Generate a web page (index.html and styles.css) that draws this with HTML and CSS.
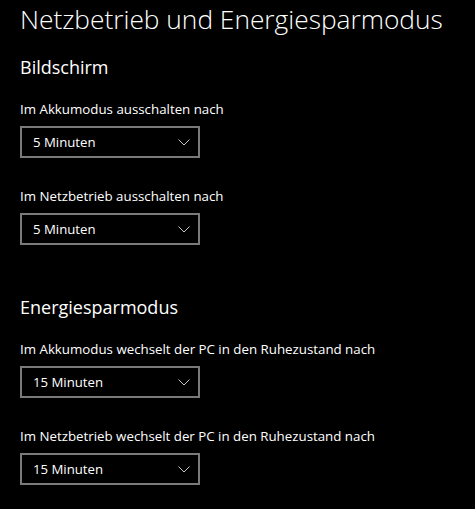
FILE: index.html
```html
<!DOCTYPE html>
<html lang="de">
  <head>
    <meta charset="UTF-8">
    <title>Netzbetrieb und Energiesparmodus</title>
    <link rel="stylesheet" href="styles.css">
  </head>
  <body>
    <h1 class="title">Netzbetrieb und Energiesparmodus</h1>

    <section class="group">
      <h2>Bildschirm</h2>
      <div class="field">
        <label>Im Akkumodus ausschalten nach</label>
        <div class="select"><span>5 Minuten</span><svg class="chev" width="12" height="7" viewBox="0 0 12 7"><path d="M0.5 0.5 L6 6 L11.5 0.5"/></svg></div>
      </div>
      <div class="field">
        <label>Im Netzbetrieb ausschalten nach</label>
        <div class="select"><span>5 Minuten</span><svg class="chev" width="12" height="7" viewBox="0 0 12 7"><path d="M0.5 0.5 L6 6 L11.5 0.5"/></svg></div>
      </div>
    </section>

    <section class="group gap">
      <h2>Energiesparmodus</h2>
      <div class="field">
        <label>Im Akkumodus wechselt der PC in den Ruhezustand nach</label>
        <div class="select"><span>15 Minuten</span><svg class="chev" width="12" height="7" viewBox="0 0 12 7"><path d="M0.5 0.5 L6 6 L11.5 0.5"/></svg></div>
      </div>
      <div class="field">
        <label>Im Netzbetrieb wechselt der PC in den Ruhezustand nach</label>
        <div class="select"><span>15 Minuten</span><svg class="chev" width="12" height="7" viewBox="0 0 12 7"><path d="M0.5 0.5 L6 6 L11.5 0.5"/></svg></div>
      </div>
    </section>
  </body>
</html>
```

FILE: styles.css
```css
html { margin: 0; padding: 0; background-color: #000; color: #fff; }
body { margin: 0; padding: 0 0 0 20px; font-family: "Open Sans", sans-serif; font-size: 13.3px; }

h1.title { margin: 0; padding-top: 1px; font-size: 26.3px; font-weight: 300; line-height: 36px; }

.group { display: flex; flex-direction: column; }
.group h2 { margin: 17px 0 0 0; font-size: 18px; font-weight: 400; line-height: 26px; }
.group.gap h2 { margin-top: 49px; }

.field { display: flex; flex-direction: column; margin-top: 19px; }
.field + .field { margin-top: 28px; }
.field label { line-height: 20px; }

.select { margin-top: 7px; width: 157px; height: 28px; border: 2px solid #7a7a7a;
          display: flex; align-items: center; justify-content: space-between;
          padding: 0 8px 0 11px; }
.select span { font-size: 13.2px; }
.chev { fill: none; stroke: #c8c8c8; stroke-width: 1; }
```
